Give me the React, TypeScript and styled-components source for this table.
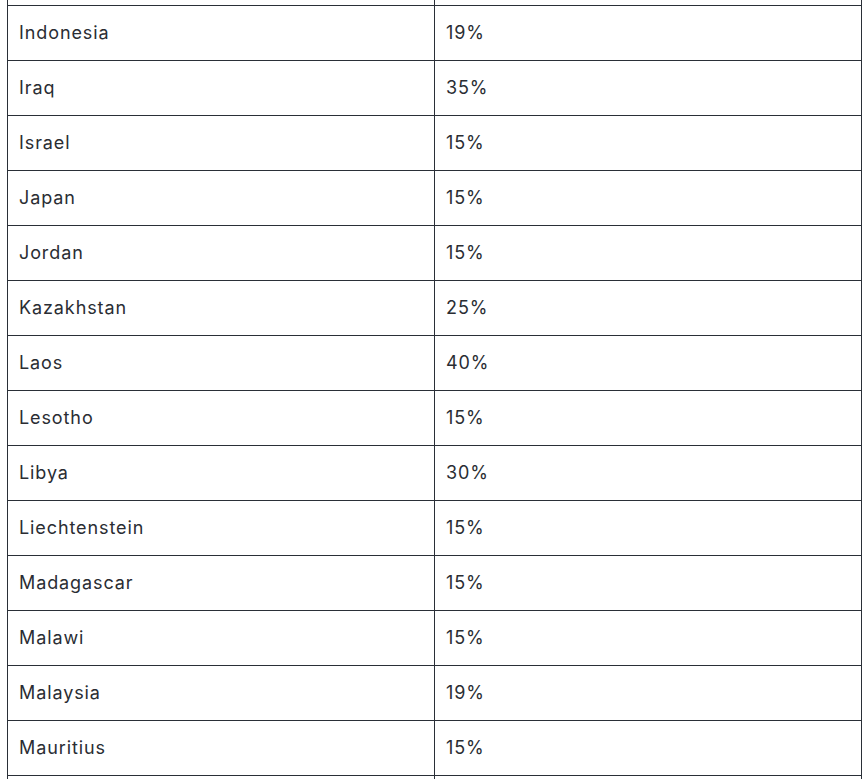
import React from "react";
import styled, { createGlobalStyle } from "styled-components";

const Global = createGlobalStyle`
  html, body { margin: 0; padding: 0; background: #ffffff; }
  body { font-family: Inter, "Noto Sans", "Liberation Sans", sans-serif; }
`;

const Viewport = styled.div`
  height: 779px;
  overflow: hidden;
`;

const Table = styled.div`
  margin: -49px 0 0 7px;
  width: 855px;
  border-left: 1px solid #2a2f37;
  display: flex;
  flex-direction: column;
`;

const Row = styled.div`
  display: grid;
  grid-template-columns: 427px 427px;
  height: 55px;
`;

const Cell = styled.div`
  display: flex;
  align-items: center;
  padding: 0 10px 2px 11px;
  border-right: 1px solid #2a2f37;
  border-bottom: 1px solid #2a2f37;
  font-size: 18px;
  color: #2a2d33;
  letter-spacing: 0.9px;
`;

const rows: [string, string][] = [
  ["", ""],
  ["Indonesia", "19%"],
  ["Iraq", "35%"],
  ["Israel", "15%"],
  ["Japan", "15%"],
  ["Jordan", "15%"],
  ["Kazakhstan", "25%"],
  ["Laos", "40%"],
  ["Lesotho", "15%"],
  ["Libya", "30%"],
  ["Liechtenstein", "15%"],
  ["Madagascar", "15%"],
  ["Malawi", "15%"],
  ["Malaysia", "19%"],
  ["Mauritius", "15%"],
  ["", ""],
];

export default function App() {
  return (
    <>
      <Global />
      <Viewport>
        <Table>
          {rows.map(([c, r], i) => (
            <Row key={i}>
              <Cell>{c}</Cell>
              <Cell>{r}</Cell>
            </Row>
          ))}
        </Table>
      </Viewport>
    </>
  );
}
